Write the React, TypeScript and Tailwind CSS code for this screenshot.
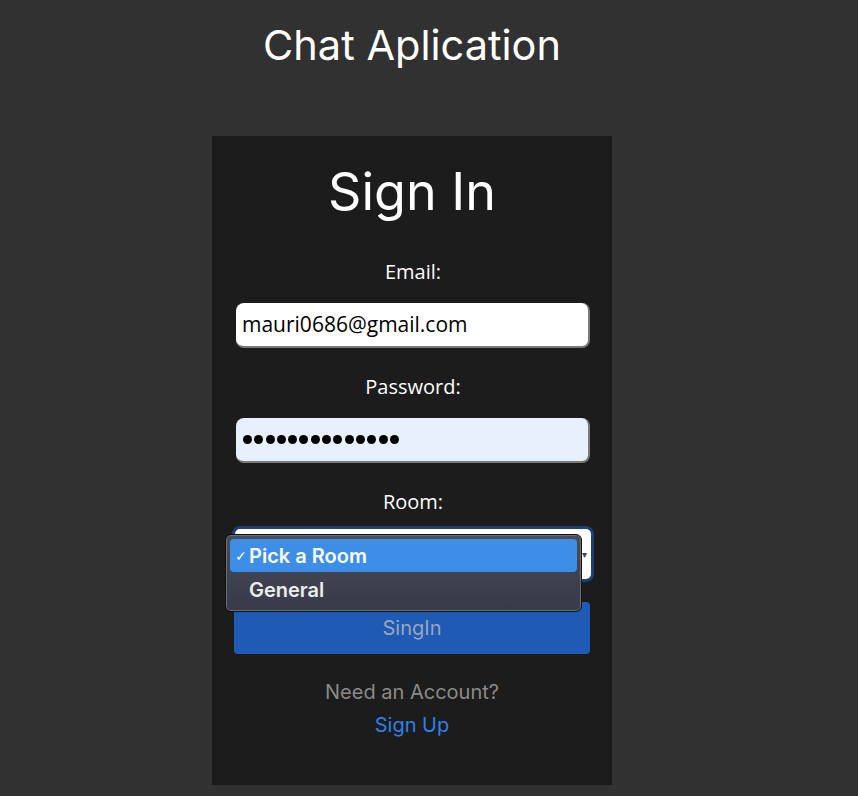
import React from 'react';

const sys = "font-['Inter',sans-serif]";
const soft = "font-['Open_Sans','Noto_Sans',sans-serif]";

const Field = ({ label, children }: { label: string; children: React.ReactNode }) => (
  <div className="flex flex-col items-center">
    <label className={`${soft} text-[20px] leading-[24px] text-white`}>{label}</label>
    <div className="mt-[19px] w-full">{children}</div>
  </div>
);

export default function App() {
  return (
    <div className="min-h-[796px] bg-[#313131]">
      <div className="flex w-[824px] flex-col items-center">
        <h1 className={`${sys} pt-[20px] text-[41.5px] leading-[50px] font-normal text-white`}>Chat Aplication</h1>

        <div className="mt-[66px] flex h-[649px] w-[400px] flex-col bg-[#1c1c1c] px-[22px]">
          <h2 className={`${sys} mt-[24px] text-center text-[52px] leading-[64px] font-normal text-white`}>Sign In</h2>

          <div className="mt-[36px] flex flex-col gap-[27px] pl-[2px]">
            <Field label="Email:">
              <div className={`${soft} flex h-[45px] items-center rounded-[8px] border-r-2 border-b-2 border-[#7a7a7a] bg-white pl-[6px] text-[21px] text-black`}>
                mauri0686@gmail.com
              </div>
            </Field>
            <Field label="Password:">
              <div className="flex h-[45px] items-center gap-[2.3px] rounded-[8px] border-r-2 border-b-2 border-[#7a7a7a] bg-[#e8f0fe] pl-[7px]">
                {Array.from({ length: 14 }).map((_, i) => (
                  <span key={i} className="h-[9px] w-[9px] rounded-full bg-black" />
                ))}
              </div>
            </Field>
            <Field label="Room:">
              <div className="relative -mt-[7px]">
                <div className="mx-[-4px] h-[56px] rounded-[8px] border-[3px] border-[#1e3f72] bg-white p-0">
                  <div className="flex h-full items-center justify-end pr-[4px] text-[10px] text-[#444]">▾</div>
                </div>
                <div className="absolute left-[-11px] top-[8px] w-[357px] rounded-[6px] border border-[#111] bg-gradient-to-b from-[#4a4d57] to-[#363a49] p-[4px] shadow-[0_0_0_1px_#6b6e78_inset]">
                  <div className="flex h-[33px] items-center rounded-[4px] bg-[#3d8ee6] text-white">
                    <span className="w-[19px] pl-[5px] text-[14px] leading-none">✓</span>
                    <span className={`${sys} text-[20px] font-semibold`}>Pick a Room</span>
                  </div>
                  <div className="flex h-[35px] items-center text-[#ececec]">
                    <span className="w-[19px]" />
                    <span className={`${sys} text-[20px] font-semibold`}>General</span>
                  </div>
                </div>
              </div>
            </Field>
          </div>

          <button className={`${sys} mt-[20px] h-[52px] w-full rounded-[4px] bg-[#1f5bb5] text-[20px] text-[#9aa6bb]`}>
            SingIn
          </button>

          <p className={`${sys} mt-[24px] text-center text-[20px] leading-[28px] text-[#8a8a8a]`}>Need an Account?</p>
          <a className={`${sys} mt-[5px] text-center text-[20px] leading-[28px] text-[#2f80e8]`}>Sign Up</a>
        </div>
      </div>
    </div>
  );
}
